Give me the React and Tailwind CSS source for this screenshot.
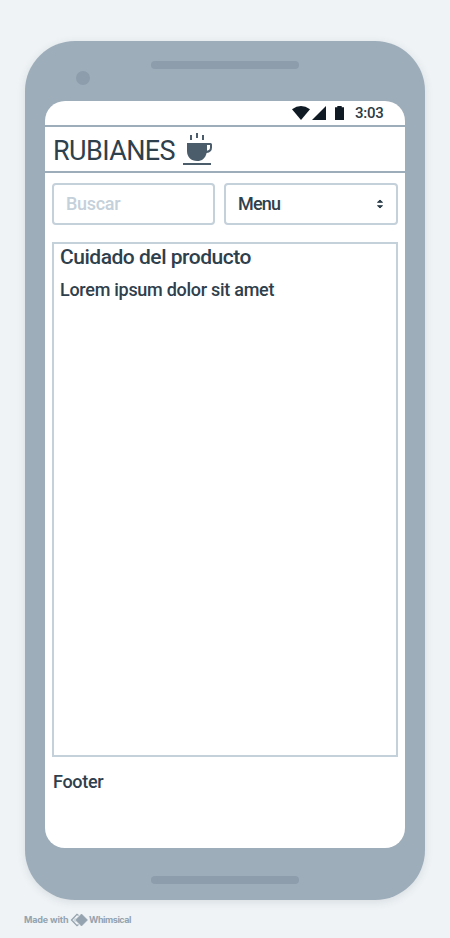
function StatusBar() {
  return (
    <div className="flex h-6 shrink-0 items-center text-[#0f1a24]">
      <svg className="ml-[246px] h-6 w-[56px]" viewBox="0 0 56 24" fill="currentColor">
        <path d="M1 8.300Q10 1.700 19 8.300L10 19Z" />
        <path d="M21 19L35 5V19Z" />
        <path d="M44 6.300h2.300V5h4.400v1.300H53V19h-9Z" />
      </svg>
      <span className="ml-[8px] text-[15px] leading-6 font-medium tracking-[-0.25px] text-[#2c3b47]">3:03</span>
    </div>
  );
}

function CoffeeIcon() {
  return (
    <svg className="h-[34px] w-[32px]" viewBox="0 0 32 34" fill="#4b5d6b">
      <path d="M8 3h2v5H8zM14 1h2v5h-2zM20 3h2v5h-2z" />
      <path
        fillRule="evenodd"
        d="M5 11H28.500Q30 11 30 12.500V15.500Q30 20.500 24.600 20.900C23.500 26 20 29 15.200 29C9 29 5 25 5 19ZM25 13V18.700Q28 18.300 28 15.500V13Z"
      />
      <path d="M1 31h28v2H1z" />
    </svg>
  );
}

function Header() {
  return (
    <header className="flex h-12 shrink-0 items-center border-y-2 border-[#9dadba] pl-2">
      <h1 className="w-[129px] pt-[3px] text-[27px] leading-[44px] tracking-[-0.6px]">RUBIANES</h1>
      <CoffeeIcon />
    </header>
  );
}

function Controls() {
  return (
    <div className="mt-[10px] flex h-[42px] shrink-0 gap-[9px] px-[7px] text-[18px] leading-[38px] font-medium">
      <div className="w-[163px] rounded-[4px] border-2 border-[#c4d0da] pl-3 tracking-[-0.3px] text-[#c4d0da]">Buscar</div>
      <div className="flex w-[174px] items-center justify-between rounded-[4px] border-2 border-[#c4d0da] pr-[12px] pl-3">
        <span className="tracking-[-0.8px]">Menu</span>
        <svg className="h-[12px] w-[8px]" viewBox="0 0 8 12" fill="currentColor">
          <path d="M1.500 4.300L4 2L6.500 4.300ZM1.500 7.700L4 10L6.500 7.700Z" stroke="currentColor" strokeLinejoin="round" />
        </svg>
      </div>
    </div>
  );
}

export default function App() {
  return (
    <div className="flex h-[938px] w-[450px] flex-col overflow-hidden bg-[#eff3f6] px-[25px] pt-[41px] font-['Roboto','Liberation_Sans',sans-serif] text-[#2f404d]">
      <div className="flex h-[859px] w-[400px] shrink-0 flex-col items-center rounded-[50px] bg-[#9dadba] shadow-[0_2px_8px_rgba(44,62,76,0.12)]">
        <div className="flex h-[60px] w-full shrink-0 items-start">
          <div className="mt-[30px] ml-[51px] h-[14px] w-[14px] rounded-full bg-[#8d9dab]" />
          <div className="mt-5 ml-[61px] h-2 w-[148px] rounded-full bg-[#8d9dab]" />
        </div>
        <main className="flex h-[747px] w-[360px] shrink-0 flex-col overflow-hidden rounded-[20px] bg-white">
          <StatusBar />
          <Header />
          <Controls />
          <section className="mx-[7px] mt-[17px] h-[515px] shrink-0 border-2 border-[#c4d0da] pl-[6px]">
            <h2 className="text-[21px] leading-[26px] font-medium tracking-[-0.48px]">Cuidado del producto</h2>
            <p className="mt-[7px] text-[18px] leading-[26px] font-medium tracking-[-0.28px]">Lorem ipsum dolor sit amet</p>
          </section>
          <footer className="mt-[12px] pl-2 text-[18px] leading-[26px] font-medium tracking-[-0.3px]">Footer</footer>
        </main>
        <div className="mt-[28px] h-2 w-[148px] rounded-full bg-[#8d9dab]" />
      </div>
      <div className="mt-[12px] flex h-4 shrink-0 items-center font-['Inter','Liberation_Sans',sans-serif] text-[9px] font-bold text-[#94a3af]">
        <span className="-ml-px w-[46px] tracking-[-0.15px] whitespace-nowrap">Made with</span>
        <svg className="h-[14px] w-[18px]" viewBox="0 0 18 14">
          <path d="M8.500 2.500L7 1.300L1.500 7L7 12.700L8.500 11.500" fill="none" stroke="#94a3af" strokeWidth="1.300" />
          <path d="M5.500 5L3.800 7L5.500 9" fill="none" stroke="#94a3af" strokeWidth="0.500" />
          <path d="M11.500 1L17.500 7L11.500 13L5.500 7Z" fill="#94a3af" stroke="#94a3af" strokeWidth="0.600" strokeLinejoin="round" />
        </svg>
        <span className="ml-px tracking-[-0.45px] whitespace-nowrap">Whimsical</span>
      </div>
    </div>
  );
}
